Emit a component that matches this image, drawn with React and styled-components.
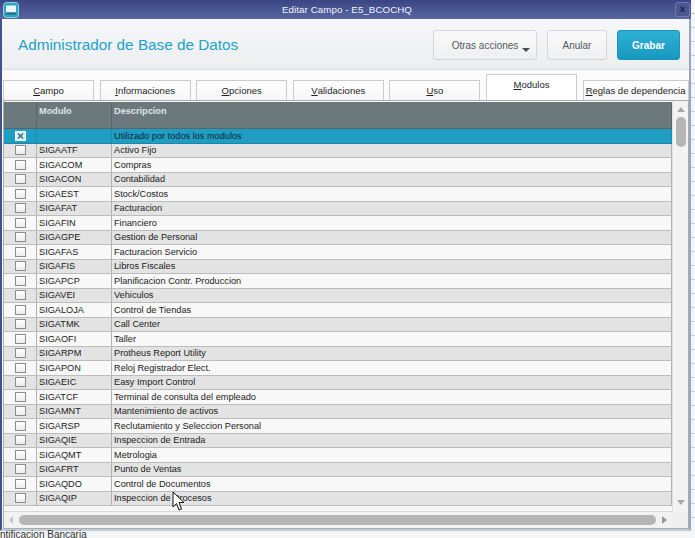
import React from 'react';
import styled, { createGlobalStyle } from 'styled-components';

const GlobalStyle = createGlobalStyle`
  html, body {
    margin: 0;
    padding: 0;
    background: #eef1f4;
  }
  * {
    box-sizing: border-box;
  }
`;

const Screen = styled.div`
  width: 695px;
  height: 538px;
  overflow: hidden;
  font-family: "Liberation Sans", Arial, sans-serif;
  background: repeating-linear-gradient(to bottom, #f3f5f7 0, #f3f5f7 13px, #c3ccd6 13px, #c3ccd6 14px);
`;

const Window = styled.div`
  width: 691px;
  display: flex;
  flex-direction: column;
`;

const TitleBar = styled.div`
  height: 19px;
  display: flex;
  align-items: center;
  justify-content: space-between;
  padding: 0 1px 0 3px;
  background: linear-gradient(to bottom, #3a4684, #5767a2);
`;

const TitleText = styled.span`
  color: #f2f4fa;
  font-size: 9.7px;
  letter-spacing: 0.1px;
`;

const CloseBtn = styled.div`
  width: 15px;
  height: 15px;
  border-radius: 3px;
  background: #4b5690;
  border: 1px solid #6f7aac;
  display: flex;
  align-items: center;
  justify-content: center;
  color: #1c2140;
  font-size: 10px;
  font-weight: bold;
  line-height: 1;
`;

const Body = styled.div`
  border-left: 2px solid #44528c;
  border-right: 2px solid #9aa6bf;
  border-bottom: 2px solid #c4ccd8;
  background: #fbfbfb;
  display: flex;
  flex-direction: column;
`;

const Header = styled.div`
  height: 51px;
  display: flex;
  align-items: center;
  justify-content: space-between;
  padding: 2px 9px 0 16px;
  background: linear-gradient(to bottom, #f6f7f8, #eceef0);
  border-bottom: 1px solid #dcdee0;
`;

const PageTitle = styled.h1`
  margin: 0;
  font-weight: normal;
  font-size: 15.3px;
  color: #1ea2cb;
`;

const Actions = styled.div`
  display: flex;
  gap: 10px;
`;

const Button = styled.button`
  position: relative;
  height: 30px;
  width: ${p => p.$w}px;
  border-radius: 3px;
  font-family: inherit;
  font-size: 10px;
  cursor: pointer;
  border: 1px solid ${p => (p.$primary ? '#1a94ba' : '#d3d5d8')};
  background: ${p =>
    p.$primary
      ? 'linear-gradient(to bottom, #2fb1d6, #1798c0)'
      : 'linear-gradient(to bottom, #fafafa, #eeeff0)'};
  color: ${p => (p.$primary ? '#ffffff' : '#555a5e')};
  font-weight: ${p => (p.$primary ? 'bold' : 'normal')};
  padding: 0;
`;

const Caret = styled.span`
  position: absolute;
  right: 6px;
  bottom: 7px;
  width: 0;
  height: 0;
  border-left: 4px solid transparent;
  border-right: 4px solid transparent;
  border-top: 4px solid #4a4e52;
`;

const TabStrip = styled.div`
  height: 30px;
  display: flex;
  align-items: flex-end;
  gap: 5.6px;
  padding-left: 1px;
  background: #fbfbfb;
  overflow: hidden;
`;

const Tab = styled.div`
  flex: 0 0 ${p => p.$w || 91}px;
  height: ${p => (p.$active ? 26 : 20)}px;
  display: flex;
  align-items: center;
  justify-content: center;
  padding-bottom: ${p => (p.$active ? 6 : 0)}px;
  border: 1px solid #c9cbcd;
  border-bottom: none;
  background: ${p => (p.$active ? '#ffffff' : 'linear-gradient(to bottom, #ffffff, #f6f6f6)')};
  font-size: 9.5px;
  color: #1e1e1e;
  white-space: nowrap;
  u {
    text-decoration: underline;
  }
`;

const Frame = styled.div`
  margin-left: 1px;
  height: 429px;
  border: 1px solid #a9acaf;
  display: grid;
  grid-template-columns: 1fr 16px;
  grid-template-rows: 1fr 16px;
  background: #f4f4f4;
`;

const TableArea = styled.div`
  padding-top: 1px;
  background: #f7f7f7;
  border-bottom: 1px solid #d8d8d8;
  overflow: hidden;
`;

const Cols = `
  display: grid;
  grid-template-columns: 33px 75px 1fr;
`;

const HeadRow = styled.div`
  ${Cols}
  height: 27px;
  background: #6b797d;
  border-bottom: 1px solid #57656a;
`;

const HeadCell = styled.div`
  padding: 4px 0 0 2px;
  font-size: 9.2px;
  font-weight: bold;
  color: #dfe5e6;
  border-right: 1px solid #5a686c;
`;

const Row = styled.div`
  ${Cols}
  height: 14.5px;
  background: ${p => (p.$selected ? '#1f9dc3' : p.$odd ? '#e3e3e3' : '#f8f8f8')};
  border-bottom: 1px solid ${p => (p.$selected ? '#1a86a8' : '#bcbcbc')};
`;

const Cell = styled.div`
  display: flex;
  align-items: center;
  justify-content: ${p => (p.$center ? 'center' : 'flex-start')};
  padding-left: ${p => (p.$center ? 0 : 2)}px;
  font-size: 9.2px;
  color: ${p => (p.$selected ? '#0c2a34' : '#1b1b1b')};
  border-right: 1px solid ${p => (p.$selected ? '#1a8db0' : '#b2b2b2')};
  white-space: nowrap;
  overflow: hidden;
`;

const Check = styled.span`
  width: 11px;
  height: 10px;
  border: 1px solid #8c8c8c;
  background: linear-gradient(to bottom, #ffffff, #ececec);
`;

const VScroll = styled.div`
  background: #f3f3f3;
  border-left: 1px solid #e2e2e2;
  display: flex;
  flex-direction: column;
  align-items: center;
  padding: 6px 0 7px;
`;

const HScroll = styled.div`
  background: #f2f2f2;
  display: flex;
  align-items: center;
  padding: 0 5px 0 5px;
  gap: 6px;
`;

const Corner = styled.div`
  background: #efefef;
`;

const Thumb = styled.div`
  background: #b5b5b5;
  border-radius: 5px;
  ${p => (p.$vertical ? 'width: 10px; height: 30px; margin-top: 5px;' : 'height: 10px; flex: 1;')}
`;

const Spacer = styled.div`
  flex: 1;
`;

const Arrow = styled.span`
  width: 0;
  height: 0;
  ${p => {
    const c = p.$color || '#a8a8a8';
    switch (p.$dir) {
      case 'up':
        return `border-left: 4px solid transparent; border-right: 4px solid transparent; border-bottom: 5px solid ${c};`;
      case 'down':
        return `border-left: 4px solid transparent; border-right: 4px solid transparent; border-top: 5px solid ${c};`;
      case 'left':
        return `border-top: 4px solid transparent; border-bottom: 4px solid transparent; border-right: 4px solid ${c};`;
      default:
        return `border-top: 4px solid transparent; border-bottom: 4px solid transparent; border-left: 5px solid ${c};`;
    }
  }}
`;

const Behind = styled.div`
  background: #f4f6f8;
  font-size: 10px;
  line-height: 8px;
  color: #333;
  white-space: nowrap;
`;

const Cursor = styled.svg`
  position: absolute;
  left: 172px;
  top: 491px;
`;

const modules = [
  ['SIGAATF', 'Activo Fijo'],
  ['SIGACOM', 'Compras'],
  ['SIGACON', 'Contabilidad'],
  ['SIGAEST', 'Stock/Costos'],
  ['SIGAFAT', 'Facturacion'],
  ['SIGAFIN', 'Financiero'],
  ['SIGAGPE', 'Gestion de Personal'],
  ['SIGAFAS', 'Facturacion Servicio'],
  ['SIGAFIS', 'Libros Fiscales'],
  ['SIGAPCP', 'Planificacion Contr. Produccion'],
  ['SIGAVEI', 'Vehiculos'],
  ['SIGALOJA', 'Control de Tiendas'],
  ['SIGATMK', 'Call Center'],
  ['SIGAOFI', 'Taller'],
  ['SIGARPM', 'Protheus Report Utility'],
  ['SIGAPON', 'Reloj Registrador Elect.'],
  ['SIGAEIC', 'Easy Import Control'],
  ['SIGATCF', 'Terminal de consulta del empleado'],
  ['SIGAMNT', 'Mantenimiento de activos'],
  ['SIGARSP', 'Reclutamiento y Seleccion Personal'],
  ['SIGAQIE', 'Inspeccion de Entrada'],
  ['SIGAQMT', 'Metrologia'],
  ['SIGAFRT', 'Punto de Ventas'],
  ['SIGAQDO', 'Control de Documentos'],
  ['SIGAQIP', 'Inspeccion de Procesos'],
];

const tabs = [
  ['C', 'ampo'],
  ['I', 'nformaciones'],
  ['O', 'pciones'],
  ['V', 'alidaciones'],
  ['U', 'so'],
  ['M', 'odulos'],
  ['R', 'eglas de dependencia'],
];

const AppIcon = () => (
  <svg width="16" height="16" viewBox="0 0 16 16">
    <rect x="0.5" y="0.5" width="15" height="15" rx="3" fill="#2fa3c2" stroke="#8fd3e4" />
    <rect x="3" y="3.5" width="10" height="7" fill="#e9f6fa" />
    <rect x="3" y="10.5" width="10" height="2" fill="#1b6f88" />
  </svg>
);

const CheckedBox = () => (
  <svg width="11" height="10" viewBox="0 0 11 10">
    <rect x="0.5" y="0.5" width="10" height="9" fill="#d9eef4" stroke="#f2fbfd" />
    <path d="M3 2.5 L8 7.5 M8 2.5 L3 7.5" stroke="#2b6b7c" strokeWidth="1.3" />
  </svg>
);

export default function App() {
  return (
    <Screen>
      <GlobalStyle />
      <Window>
        <TitleBar>
          <AppIcon />
          <TitleText>Editar Campo - E5_BCOCHQ</TitleText>
          <CloseBtn>×</CloseBtn>
        </TitleBar>
        <Body>
          <Header>
            <PageTitle>Administrador de Base de Datos</PageTitle>
            <Actions>
              <Button $w={104}>
                Otras acciones
                <Caret />
              </Button>
              <Button $w={60}>Anular</Button>
              <Button $w={63} $primary>Grabar</Button>
            </Actions>
          </Header>
          <TabStrip>
            {tabs.map(([k, rest], i) => (
              <Tab key={k} $active={i === 5} $w={i === 6 ? 106 : 91}>
                <u>{k}</u>
                {rest}
              </Tab>
            ))}
          </TabStrip>
          <Frame>
            <TableArea>
              <HeadRow>
                <HeadCell />
                <HeadCell>Modulo</HeadCell>
                <HeadCell>Descripcion</HeadCell>
              </HeadRow>
              <Row $selected>
                <Cell $center $selected>
                  <CheckedBox />
                </Cell>
                <Cell $selected />
                <Cell $selected>Utilizado por todos los modulos</Cell>
              </Row>
              {modules.map(([code, desc], i) => (
                <Row key={code} $odd={i % 2 === 0}>
                  <Cell $center>
                    <Check />
                  </Cell>
                  <Cell>{code}</Cell>
                  <Cell>{desc}</Cell>
                </Row>
              ))}
            </TableArea>
            <VScroll>
              <Arrow $dir="up" />
              <Thumb $vertical />
              <Spacer />
              <Arrow $dir="down" />
            </VScroll>
            <HScroll>
              <Arrow $dir="left" $color="#c4c4c4" />
              <Thumb />
              <Arrow $dir="right" $color="#9a9a9a" />
            </HScroll>
            <Corner />
          </Frame>
        </Body>
      </Window>
      <Behind>ntificacion Bancaria</Behind>
      <Cursor width="14" height="21" viewBox="0 0 14 21">
        <path d="M1 1 L1 16 L4.5 12.5 L7 19 L9.5 18 L7 11.5 L12 11.5 Z" fill="#ffffff" stroke="#111" strokeWidth="1" strokeLinejoin="round" />
      </Cursor>
    </Screen>
  );
}
